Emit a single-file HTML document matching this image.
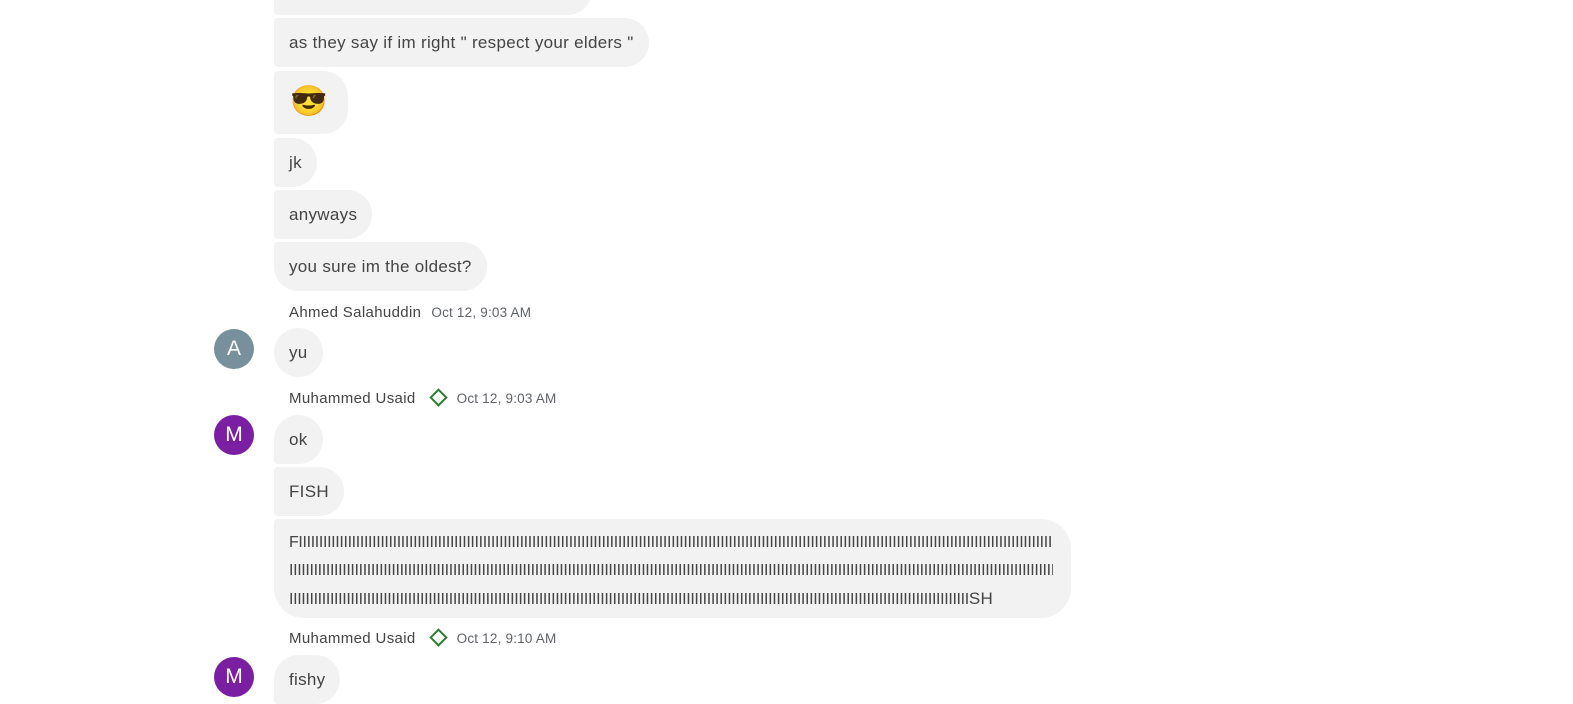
<!DOCTYPE html>
<html><head><meta charset="utf-8"><style>
body{margin:0;width:1573px;height:687px;background:#fff;overflow:hidden;position:relative;font-family:"Liberation Sans",sans-serif;color:#444}
.b{position:absolute;left:274px;background:#f2f2f2;font-size:17px;letter-spacing:0.3px;line-height:20px;padding:15px 15px;box-sizing:border-box;height:49px;white-space:nowrap;border-radius:4px 25px 25px 4px}
.last{border-bottom-left-radius:25px}
.first{border-top-left-radius:25px}
.solo{border-radius:25px}
.n{position:absolute;left:289px;font-size:15px;letter-spacing:0.35px;color:#444}
.n .t{font-size:13.5px;letter-spacing:0.2px;color:#5f6368;margin-left:10px}
.av{position:absolute;left:214px;width:40px;height:40px;border-radius:50%;color:#fff;font-size:21px;text-align:center;line-height:40px}
.d{display:inline-block;width:9px;height:9px;border:2px solid #2e7d32;transform:rotate(45deg);margin:0 12px 0 16px;vertical-align:-1px}
.L{white-space:nowrap;overflow:hidden;width:764px;letter-spacing:-0.35px;line-height:28px;font-size:16px}
</style></head><body>
<div class="b" style="top:-34px;width:318px"></div>
<div class="b" style="top:18px">as they say if im right " respect your elders "</div>
<div class="b" style="top:71px;height:63px;width:74px;padding:12px 16px;font-size:30px;line-height:38px">😎</div>
<div class="b" style="top:138px">jk</div>
<div class="b" style="top:190px">anyways</div>
<div class="b last" style="top:242px">you sure im the oldest?</div>

<div class="n" style="top:304px">Ahmed Salahuddin<span class="t">Oct 12, 9:03 AM</span></div>
<div class="av" style="top:329px;background:#78909c">A</div>
<div class="b solo" style="top:328px">yu</div>

<div class="n" style="top:390px">Muhammed Usaid<span class="d"></span><span class="t" style="margin-left:0">Oct 12, 9:03 AM</span></div>
<div class="av" style="top:415px;background:#7b1fa2">M</div>
<div class="b first" style="top:415px">ok</div>
<div class="b" style="top:467px">FISH</div>
<div class="b last" style="top:519px;height:99px;width:797px;padding:10px 15px;border-radius:4px 30px 30px 30px">
<div class="L">FIIIIIIIIIIIIIIIIIIIIIIIIIIIIIIIIIIIIIIIIIIIIIIIIIIIIIIIIIIIIIIIIIIIIIIIIIIIIIIIIIIIIIIIIIIIIIIIIIIIIIIIIIIIIIIIIIIIIIIIIIIIIIIIIIIIIIIIIIIIIIIIIIIIIIIIIIIIIIIIIIIIIIIIIIIIIIIIIIIIIIIIIIIIIIIIIIIIIIIII</div>
<div class="L">IIIIIIIIIIIIIIIIIIIIIIIIIIIIIIIIIIIIIIIIIIIIIIIIIIIIIIIIIIIIIIIIIIIIIIIIIIIIIIIIIIIIIIIIIIIIIIIIIIIIIIIIIIIIIIIIIIIIIIIIIIIIIIIIIIIIIIIIIIIIIIIIIIIIIIIIIIIIIIIIIIIIIIIIIIIIIIIIIIIIIIIIIIIIIIIIIIIIIIII</div>
<div class="L">IIIIIIIIIIIIIIIIIIIIIIIIIIIIIIIIIIIIIIIIIIIIIIIIIIIIIIIIIIIIIIIIIIIIIIIIIIIIIIIIIIIIIIIIIIIIIIIIIIIIIIIIIIIIIIIIIIIIIIIIIIIIIIIIIIIIIIIIIIIIIIIIIIIIIIIIIIIIIIIIIIIIII<span style="letter-spacing:0.3px;font-size:17px">SH</span></div>
</div>

<div class="n" style="top:630px">Muhammed Usaid<span class="d"></span><span class="t" style="margin-left:0">Oct 12, 9:10 AM</span></div>
<div class="av" style="top:657px;background:#7b1fa2">M</div>
<div class="b first" style="top:655px">fishy</div>
</body></html>
